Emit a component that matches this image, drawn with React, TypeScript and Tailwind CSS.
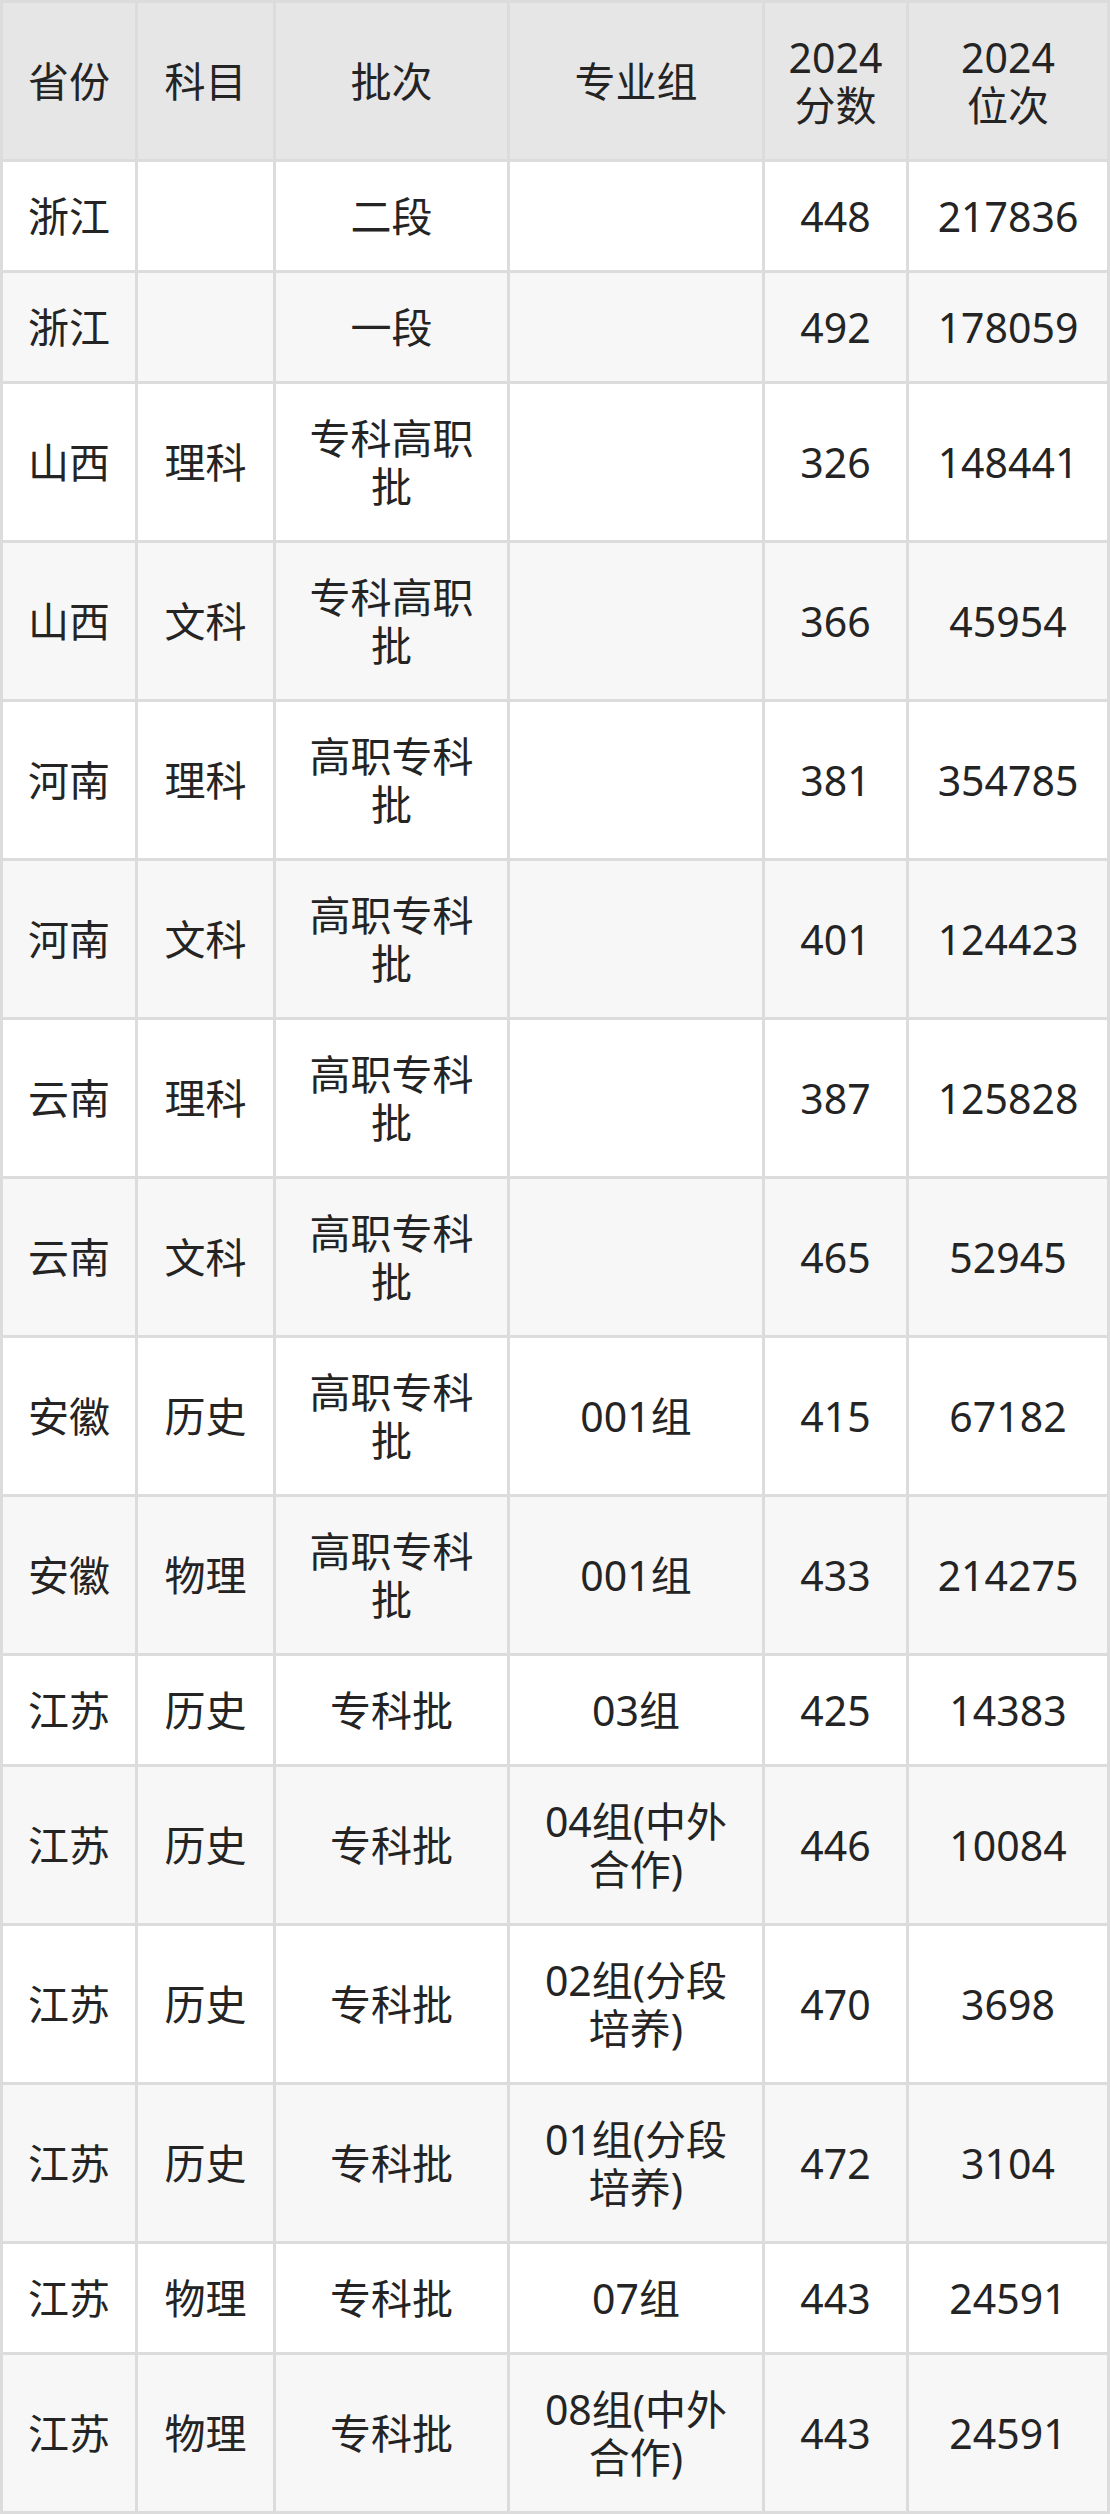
import React from "react";

type Row = { p: string; s: string; b: string[]; g: string[]; score: string; rank: string };

const rows: Row[] = [
  { p: "浙江", s: "", b: ["二段"], g: [], score: "448", rank: "217836" },
  { p: "浙江", s: "", b: ["一段"], g: [], score: "492", rank: "178059" },
  { p: "山西", s: "理科", b: ["专科高职", "批"], g: [], score: "326", rank: "148441" },
  { p: "山西", s: "文科", b: ["专科高职", "批"], g: [], score: "366", rank: "45954" },
  { p: "河南", s: "理科", b: ["高职专科", "批"], g: [], score: "381", rank: "354785" },
  { p: "河南", s: "文科", b: ["高职专科", "批"], g: [], score: "401", rank: "124423" },
  { p: "云南", s: "理科", b: ["高职专科", "批"], g: [], score: "387", rank: "125828" },
  { p: "云南", s: "文科", b: ["高职专科", "批"], g: [], score: "465", rank: "52945" },
  { p: "安徽", s: "历史", b: ["高职专科", "批"], g: ["001组"], score: "415", rank: "67182" },
  { p: "安徽", s: "物理", b: ["高职专科", "批"], g: ["001组"], score: "433", rank: "214275" },
  { p: "江苏", s: "历史", b: ["专科批"], g: ["03组"], score: "425", rank: "14383" },
  { p: "江苏", s: "历史", b: ["专科批"], g: ["04组(中外", "合作)"], score: "446", rank: "10084" },
  { p: "江苏", s: "历史", b: ["专科批"], g: ["02组(分段", "培养)"], score: "470", rank: "3698" },
  { p: "江苏", s: "历史", b: ["专科批"], g: ["01组(分段", "培养)"], score: "472", rank: "3104" },
  { p: "江苏", s: "物理", b: ["专科批"], g: ["07组"], score: "443", rank: "24591" },
  { p: "江苏", s: "物理", b: ["专科批"], g: ["08组(中外", "合作)"], score: "443", rank: "24591" },
];

function Cell({ lines, bg }: { lines: string[]; bg: string }) {
  return (
    <div className={`${bg} flex flex-col items-center justify-center py-[30px] text-center whitespace-nowrap`}>
      {lines.length === 0 ? <span className="leading-[48px]">&nbsp;</span> : null}
      {lines.map((l, i) => (
        <span key={i} className="leading-[48px]">
          {l}
        </span>
      ))}
    </div>
  );
}

export default function App() {
  return (
    <div
      className="w-[1110px] bg-white text-[41px] text-[#242424]"
      style={{ fontFamily: '"Noto Sans", "Noto Sans CJK SC", sans-serif' }}
    >
      <div className="grid grid-cols-[132px_135px_231px_252px_141px_198px] gap-[3px] bg-[#dcdcdc] p-[3px]">
        <Cell lines={["省份"]} bg="bg-[#e6e6e6]" />
        <Cell lines={["科目"]} bg="bg-[#e6e6e6]" />
        <Cell lines={["批次"]} bg="bg-[#e6e6e6]" />
        <Cell lines={["专业组"]} bg="bg-[#e6e6e6]" />
        <Cell lines={["2024", "分数"]} bg="bg-[#e6e6e6]" />
        <Cell lines={["2024", "位次"]} bg="bg-[#e6e6e6]" />
        {rows.map((r, i) => {
          const bg = i % 2 === 0 ? "bg-white" : "bg-[#f7f7f7]";
          return (
            <React.Fragment key={i}>
              <Cell lines={[r.p]} bg={bg} />
              <Cell lines={r.s ? [r.s] : []} bg={bg} />
              <Cell lines={r.b} bg={bg} />
              <Cell lines={r.g} bg={bg} />
              <Cell lines={[r.score]} bg={bg} />
              <Cell lines={[r.rank]} bg={bg} />
            </React.Fragment>
          );
        })}
      </div>
    </div>
  );
}
